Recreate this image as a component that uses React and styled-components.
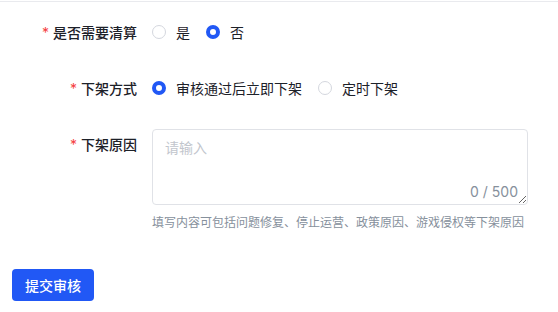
import React, { useState } from "react";
import styled, { createGlobalStyle } from "styled-components";

const Global = createGlobalStyle`
  html, body { margin: 0; padding: 0; background: #fff; }
  body { font-family: Inter, "Noto Sans CJK SC", sans-serif; -webkit-font-smoothing: antialiased; }
`;

const Page = styled.div`
  margin-top: 1px;
  border-top: 1px solid #e9eaee;
  padding: 14px 12px 0 12px;
`;

const Form = styled.div`
  display: flex;
  flex-direction: column;
  gap: 24px;
`;

const Row = styled.div`
  display: grid;
  grid-template-columns: 125px 1fr;
  column-gap: 15px;
  align-items: ${(p) => (p.$top ? "start" : "center")};
`;

const Label = styled.div`
  display: flex;
  justify-content: flex-end;
  align-items: center;
  height: 32px;
  font-size: 14px;
  font-weight: 500;
  color: #1d2129;
  font-family: "Noto Sans CJK SC", sans-serif;
`;

const Star = styled.span`
  color: #f53f3f;
  margin-right: 4px;
  font-size: 14px;
  font-family: Inter, sans-serif;
  font-weight: 400;
`;

const Group = styled.div`
  display: flex;
  align-items: center;
  gap: 16px;
  height: 32px;
`;

const RadioItem = styled.label`
  display: flex;
  align-items: center;
  gap: 10px;
  cursor: pointer;
  font-size: 14px;
  color: #1d2129;
  font-family: "Noto Sans CJK SC", sans-serif;
`;

const Dot = styled.span`
  box-sizing: border-box;
  width: 14px;
  height: 14px;
  border-radius: 50%;
  background: #fff;
  border: ${(p) => (p.$on ? "4px solid #2158f5" : "1px solid #d4d7de")};
`;

const Field = styled.div`
  display: flex;
  flex-direction: column;
`;

const AreaWrap = styled.div`
  position: relative;
  width: 376px;
`;

const Area = styled.textarea`
  box-sizing: border-box;
  display: block;
  width: 376px;
  height: 76px;
  margin: 1px 0 0 0;
  padding: 7px 12px;
  border: 1px solid #e0e2e7;
  border-radius: 4px;
  resize: vertical;
  font-size: 14px;
  line-height: 20px;
  color: #1d2129;
  font-family: "Noto Sans CJK SC", sans-serif;
  outline: none;
  &::placeholder { color: #c2c6cd; }
`;

const Counter = styled.span`
  position: absolute;
  right: 10px;
  bottom: 3px;
  font-size: 14px;
  line-height: 20px;
  color: #86909c;
  font-family: Inter, sans-serif;
`;

const Help = styled.div`
  margin-top: 7px;
  font-size: 12px;
  line-height: 20px;
  color: #86909c;
  font-family: "Noto Sans CJK SC", sans-serif;
`;

const Submit = styled.button`
  margin-top: 37px;
  width: 82px;
  height: 32px;
  border: none;
  border-radius: 4px;
  background: #2158f5;
  color: #fff;
  font-size: 14px;
  font-weight: 500;
  font-family: "Noto Sans CJK SC", sans-serif;
  cursor: pointer;
  padding: 0;
`;

function Radio({ on, label, onClick }) {
  return (
    <RadioItem onClick={onClick}>
      <Dot $on={on} />
      <span>{label}</span>
    </RadioItem>
  );
}

export default function App() {
  const [clear, setClear] = useState("no");
  const [mode, setMode] = useState("now");
  const [text, setText] = useState("");
  return (
    <>
      <Global />
      <Page>
        <Form>
          <Row>
            <Label><Star>*</Star>是否需要清算</Label>
            <Group>
              <Radio on={clear === "yes"} label="是" onClick={() => setClear("yes")} />
              <Radio on={clear === "no"} label="否" onClick={() => setClear("no")} />
            </Group>
          </Row>
          <Row>
            <Label><Star>*</Star>下架方式</Label>
            <Group>
              <Radio on={mode === "now"} label="审核通过后立即下架" onClick={() => setMode("now")} />
              <Radio on={mode === "timed"} label="定时下架" onClick={() => setMode("timed")} />
            </Group>
          </Row>
          <Row $top>
            <Label><Star>*</Star>下架原因</Label>
            <Field>
              <AreaWrap>
                <Area placeholder="请输入" value={text} maxLength={500} onChange={(e) => setText(e.target.value)} />
                <Counter>{text.length} / 500</Counter>
              </AreaWrap>
              <Help>填写内容可包括问题修复、停止运营、政策原因、游戏侵权等下架原因</Help>
            </Field>
          </Row>
        </Form>
        <Submit>提交审核</Submit>
      </Page>
    </>
  );
}
